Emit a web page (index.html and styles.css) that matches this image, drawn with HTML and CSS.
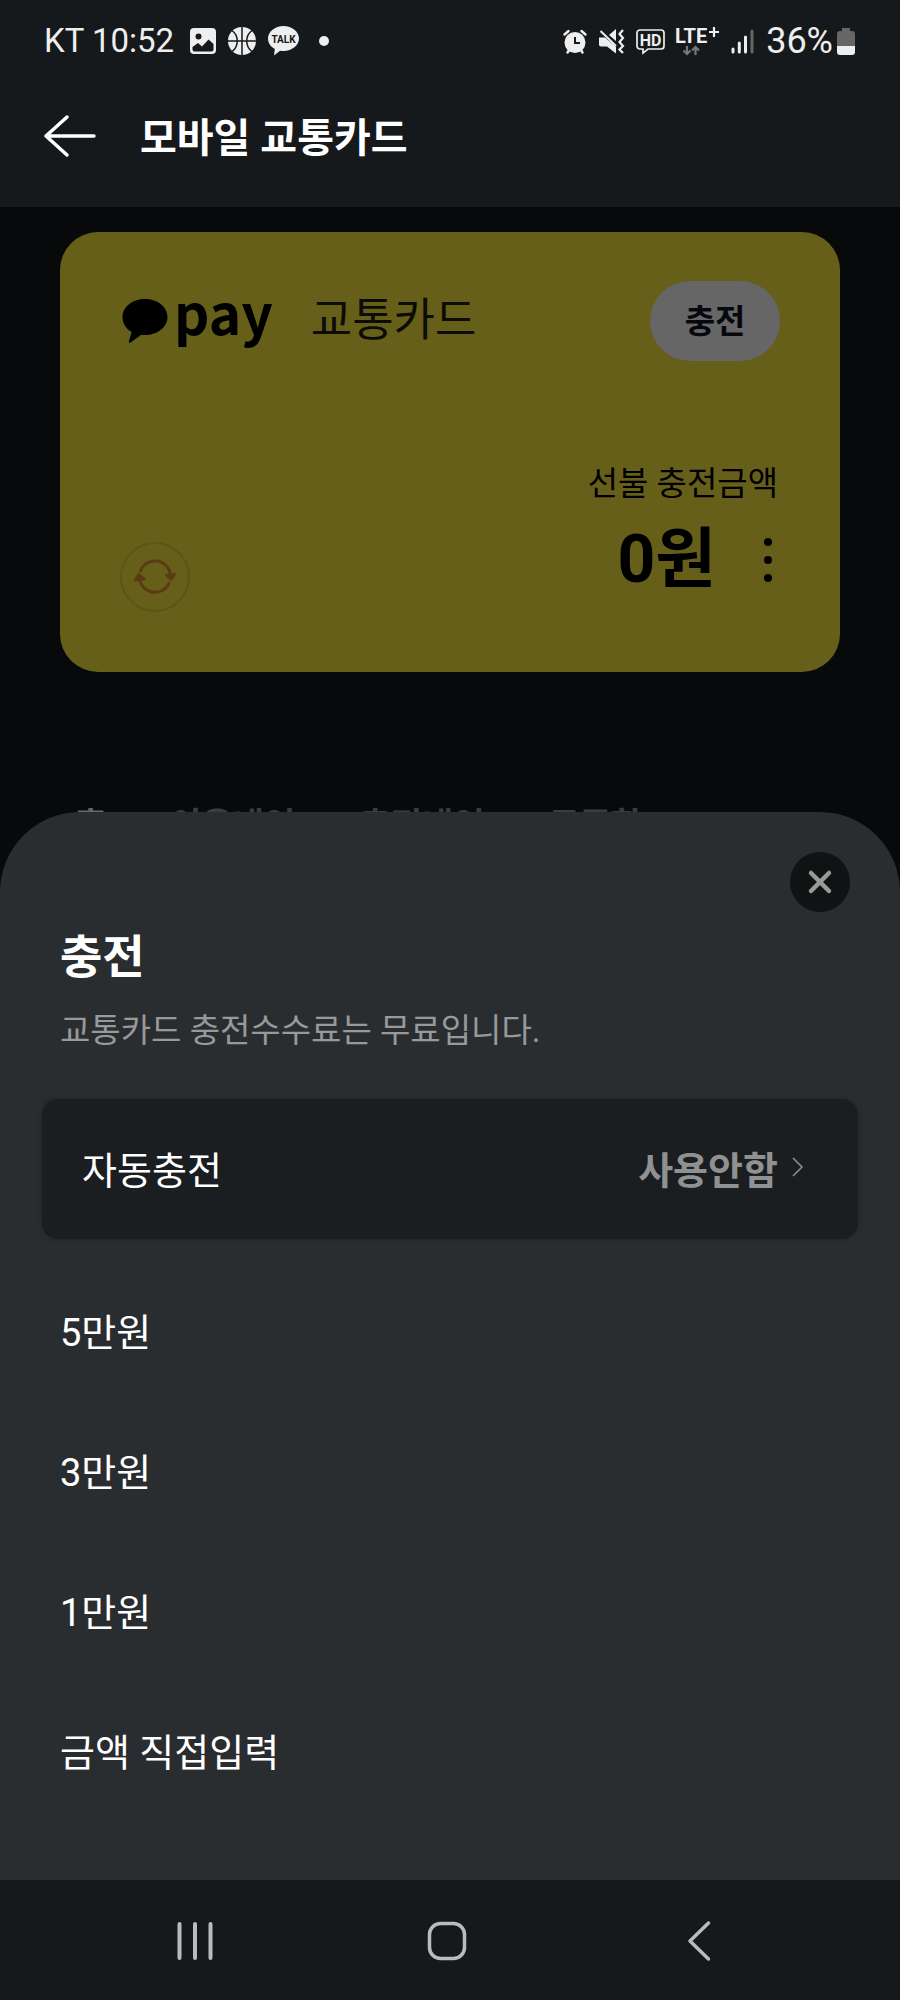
FILE: index.html
```html
<!DOCTYPE html>
<html lang="ko">
<head>
<meta charset="utf-8">
<meta name="viewport" content="width=device-width, initial-scale=1">
<title>모바일 교통카드</title>
<link rel="stylesheet" href="styles.css">
</head>
<body>
<div class="screen">
  <header class="header">
    <div class="status">
      <div class="status-left">
        <span class="status-text carrier">KT 10:52</span>
        <svg width="26" height="26" viewBox="0 0 26 26"><path fill="#eee" fill-rule="evenodd" d="M4 0h18a4 4 0 0 1 4 4v18a4 4 0 0 1-4 4H4a4 4 0 0 1-4-4V4a4 4 0 0 1 4-4zM8.500 5.500a3 3 0 1 0 0 6 3 3 0 0 0 0-6zM2.500 19v2.500a2 2 0 0 0 2 2h17a2 2 0 0 0 2-2V16l-5-4.500-6.500 7-4-3.500z"/></svg>
        <svg width="28" height="28" viewBox="0 0 28 28"><circle cx="14" cy="14" r="14" fill="#eee"/><path d="M14 0v28M0 14h28M4 3.500c7 5 7 16 0 21M24 3.500c-7 5-7 16 0 21" fill="none" stroke="#15191c" stroke-width="1.500"/></svg>
        <svg width="31" height="30" viewBox="0 0 31 30"><path fill="#eee" d="M15.500 0C24 0 31 5.600 31 12.500S24 25 15.500 25c-1.200 0-2.300-.1-3.400-.3L6 29.600l.8-6.600C2.700 20.800 0 17 0 12.500 0 5.600 7 0 15.500 0z"/><text x="15.500" y="17" text-anchor="middle" class="talk-text">TALK</text></svg>
        <span class="dot"></span>
      </div>
      <div class="status-right">
        <svg width="24" height="25" viewBox="0 0 24 25"><path d="M1.500 5.500 5.500 2M22.500 5.500 18.500 2M4.500 23.500l2-3M19.500 23.500l-2-3" stroke="#eee" stroke-width="2.500" stroke-linecap="round"/><circle cx="12" cy="13.500" r="10.500" fill="#eee"/><path d="M12 8v6h5" fill="none" stroke="#15191c" stroke-width="2"/></svg>
        <svg width="25" height="25" viewBox="0 0 25 25"><path fill="#eee" d="M0 8.500h6L17 18v6.500L8 17.500H2a2 2 0 0 1-2-2zM10 6l7-6v12z"/><path d="M1.500 2 17 17" stroke="#eee" stroke-width="2"/><path d="M24 1l-3.500 4L24 9l-3.500 4 3.500 4-3.500 3.500L24 24" fill="none" stroke="#eee" stroke-width="2.200"/></svg>
        <svg width="29" height="25" viewBox="0 0 29 25"><path d="M4 1h21a3 3 0 0 1 3 3v13a3 3 0 0 1-3 3H12l-5 4v-4H4a3 3 0 0 1-3-3V4a3 3 0 0 1 3-3z" fill="none" stroke="#eee" stroke-width="1.700"/><text x="14.500" y="16.500" text-anchor="middle" class="hd-text">HD</text></svg>
        <svg class="i-lte" width="44" height="30" viewBox="0 0 44 30"><path d="M12 20v8M8.500 24.500 12 28l3.500-3.500M20.500 29v-8M17 24.500l3.500-3.500 3.500 3.500" fill="none" stroke="#777" stroke-width="2.200"/><text x="0" y="17" class="lte-text">LTE</text><path d="M39 1v10M34 6h10" stroke="#eee" stroke-width="2.200"/></svg>
        <svg width="23" height="25" viewBox="0 0 23 25"><g stroke-width="3" stroke-linecap="round"><path d="M2 20v3M8.300 14v9M14.500 8v15" stroke="#eee"/><path d="M21 2v21" stroke="#666"/></g></svg>
        <span class="status-text percent">36%</span>
        <svg class="i-batt" width="18" height="27" viewBox="0 0 18 27"><path fill="#666" d="M5 0h8v3h2a3 3 0 0 1 3 3v12H0V6a3 3 0 0 1 3-3h2z"/><path fill="#eee" d="M0 18h18v6a3 3 0 0 1-3 3H3a3 3 0 0 1-3-3z"/></svg>
      </div>
    </div>
    <div class="titlebar">
      <button class="icon-btn" type="button" aria-label="뒤로"><svg width="52" height="42" viewBox="0 0 52 42"><path d="M23 2 2 21l21 19M2 21h48" fill="none" stroke="#fff" stroke-width="3.500" stroke-linecap="round" stroke-linejoin="round"/></svg></button>
      <h1 class="title">모바일 교통카드</h1>
    </div>
  </header>

  <main class="stage">
    <div class="content">
      <section class="card">
        <div class="card-top">
          <div class="brand">
            <svg width="46" height="44" viewBox="0 0 46 44"><path d="M23 0c12.400 0 22.500 7.800 22.500 18S35.400 36 23 36c-1.300 0-2.500-.1-3.700-.2L8.500 43.600c-1 .6-2 0-1.600-1.200L9.600 33C4 29.900.5 24.400.5 18 .5 7.800 10.600 0 23 0z"/></svg>
            <span class="brand-pay">pay</span>
          </div>
          <span class="card-name">교통카드</span>
          <button class="charge-btn" type="button">충전</button>
        </div>
        <div class="card-bottom">
          <button class="refresh" type="button" aria-label="새로고침"><svg width="42" height="36" viewBox="0 0 42 36"><g fill="none" stroke="#5b3b16" stroke-width="3" stroke-linecap="round" stroke-linejoin="round"><path d="M6.500 12A15.500 15.500 0 0 1 36.500 18M35 24.500A15.500 15.500 0 0 1 5.500 18"/><path fill="#5b3b16" d="M32.500 16.500l4.500 4 3.500-5zM1.500 21l3.500-5.500 5 4.500z"/></g></svg></button>
          <div class="balance">
            <span class="balance-label">선불 충전금액</span>
            <div class="balance-row">
              <strong class="amount">0원</strong>
              <button class="icon-btn" type="button" aria-label="더보기"><svg width="8" height="44" viewBox="0 0 8 44"><circle cx="4" cy="4" r="4"/><circle cx="4" cy="22" r="4"/><circle cx="4" cy="40" r="4"/></svg></button>
            </div>
          </div>
        </div>
      </section>
      <nav class="tabs">
        <a class="tab tab-on" href="#home">홈</a>
        <a class="tab" href="#usage">이용내역</a>
        <a class="tab" href="#charges">충전내역</a>
        <a class="tab" href="#coupons">쿠폰함</a>
      </nav>
    </div>

    <section class="sheet" role="dialog" aria-labelledby="sheet-title">
      <button class="close" type="button" aria-label="닫기"><svg width="24" height="24" viewBox="0 0 24 24"><path d="M3 3l18 18M21 3 3 21" stroke="#999b9b" stroke-width="4.500" stroke-linecap="round"/></svg></button>
      <h2 class="sheet-title" id="sheet-title">충전</h2>
      <p class="sheet-sub">교통카드 충전수수료는 무료입니다.</p>
      <button class="auto" type="button">
        <span>자동충전</span>
        <span class="auto-value">사용안함 <svg width="12" height="20" viewBox="0 0 12 20"><path d="M1 1l9 9-9 9" fill="none" stroke="#8f9192" stroke-width="1.500"/></svg></span>
      </button>
      <ul class="options">
        <li><button class="option" type="button">5만원</button></li>
        <li><button class="option" type="button">3만원</button></li>
        <li><button class="option" type="button">1만원</button></li>
        <li><button class="option" type="button">금액 직접입력</button></li>
      </ul>
    </section>
  </main>

  <footer class="sysnav">
    <button class="icon-btn" type="button" aria-label="최근 앱"><svg width="40" height="40" viewBox="0 0 40 40"><path d="M4.500 3v34M20 3v34M35.500 3v34" stroke="#bbb" stroke-width="4" stroke-linecap="round"/></svg></button>
    <button class="icon-btn" type="button" aria-label="홈"><svg width="40" height="40" viewBox="0 0 40 40"><rect x="2.500" y="2.500" width="35" height="35" rx="11" fill="none" stroke="#bbb" stroke-width="3.500"/></svg></button>
    <button class="icon-btn" type="button" aria-label="이전"><svg width="24" height="40" viewBox="0 0 24 40"><path d="M21.500 2 3 20l18.500 18" fill="none" stroke="#bbb" stroke-width="3.500" stroke-linecap="round" stroke-linejoin="round"/></svg></button>
  </footer>
</div>
</body>
</html>
```

FILE: styles.css
```css
* {
  box-sizing: border-box;
}

body {
  margin: 0;
  background: #15191c;
  font-family: Roboto, "Noto Sans CJK KR", sans-serif;
}

h1, h2, p, ul {
  margin: 0;
  padding: 0;
}

ul {
  list-style: none;
}

svg {
  display: block;
  flex: none;
  overflow: visible;
}

button {
  border: 0;
  padding: 0;
  background: none;
  color: inherit;
  font: inherit;
}

.screen {
  display: flex;
  flex-direction: column;
  min-height: 100vh;
}

.icon-btn {
  display: flex;
  align-items: center;
  justify-content: center;
}

/* Header */
.header {
  padding: 0 45px 17px 44px;
  color: #fff;
}

.status {
  display: flex;
  align-items: center;
  justify-content: space-between;
  height: 82px;
}

.status-left,
.status-right {
  display: flex;
  align-items: center;
}

.status-text {
  color: #eee;
  font-size: 33px;
  line-height: 40px;
}

.carrier {
  padding-right: 4px;
}

.percent {
  font-size: 36px;
}

.status-left,
.status-right {
  gap: 12px;
}

.i-lte {
  margin-left: -2px;
}

.i-batt {
  margin-left: -8px;
}

.dot {
  width: 10px;
  height: 10px;
  margin-left: 8px;
  border-radius: 50%;
  background: #eee;
}

.talk-text {
  fill: #15191c;
  font-size: 10px;
  font-weight: 700;
}

.hd-text {
  fill: #eee;
  font-size: 16px;
  font-weight: 700;
}

.lte-text {
  fill: #eee;
  font-size: 20px;
  font-weight: 700;
}

.titlebar {
  display: flex;
  align-items: center;
  gap: 44px;
  height: 108px;
}

.title {
  padding-top: 6px;
  font-size: 40px;
  font-weight: 700;
  line-height: 56px;
}

/* Dimmed page under the sheet */
.stage {
  display: grid;
  flex: 1;
  background: #08090b;
}

.content,
.sheet {
  grid-area: 1 / 1;
}

.content {
  padding: 25px 60px 0;
}

.card {
  display: flex;
  flex-direction: column;
  justify-content: space-between;
  min-height: 440px;
  padding: 49px 60px 60px 62px;
  border-radius: 38px;
  background: #665f19;
  color: #000;
}

.card-top {
  display: flex;
  align-items: center;
  height: 80px;
}

.brand {
  display: flex;
  align-items: center;
  gap: 6px;
}

.brand-pay {
  padding-bottom: 20px;
  font-family: "Noto Sans CJK KR", sans-serif;
  font-size: 55px;
  font-weight: 700;
  line-height: 80px;
}

.card-name {
  margin-left: 38px;
  color: #0c0c05;
  font-size: 45px;
  line-height: 64px;
}

.charge-btn {
  width: 130px;
  height: 80px;
  margin-left: auto;
  padding-bottom: 4px;
  border-radius: 40px;
  background: #666;
  color: #060810;
  font-size: 33px;
  font-weight: 700;
}

.card-bottom {
  display: flex;
  align-items: flex-end;
  justify-content: space-between;
}

.refresh {
  display: flex;
  align-items: center;
  justify-content: center;
  width: 70px;
  height: 70px;
  margin-left: -2px;
  border: 2px solid #5d5417;
  border-radius: 50%;
}

.balance {
  display: flex;
  flex-direction: column;
  align-items: flex-end;
  gap: 20px;
  padding-bottom: 16px;
}

.balance-label {
  padding-right: 2px;
  font-size: 33px;
  line-height: 40px;
}

.balance-row {
  display: flex;
  align-items: center;
  gap: 48px;
  padding-right: 8px;
}

.amount {
  font-size: 66px;
  line-height: 72px;
}

.tabs {
  display: flex;
  gap: 64px;
  padding: 129px 15px 0;
}

.tab {
  color: #3b3c3c;
  font-size: 34px;
  font-weight: 700;
  line-height: 48px;
  text-decoration: none;
}

.tab-on {
  color: #666;
}

/* Bottom sheet */
.sheet {
  z-index: 1;
  align-self: end;
  display: flex;
  flex-direction: column;
  padding: 40px 42px 59px;
  border-radius: 80px 80px 0 0;
  background: #292d30;
  color: #fff;
}

.close {
  display: flex;
  align-items: center;
  justify-content: center;
  align-self: flex-end;
  width: 60px;
  height: 60px;
  margin-right: 8px;
  border-radius: 50%;
  background: #111214;
}

.sheet-title {
  margin-top: 15px;
  padding: 0 18px;
  font-size: 46px;
  font-weight: 700;
  line-height: 60px;
}

.sheet-sub {
  margin-top: 24px;
  padding: 0 18px;
  color: #97999a;
  font-size: 33px;
  line-height: 40px;
}

.auto {
  display: flex;
  align-items: center;
  justify-content: space-between;
  height: 140px;
  margin-top: 48px;
  padding: 0 54px 4px 40px;
  border-radius: 16px;
  background: #1a1e20;
  box-shadow: 0 0 4px #1f2326;
  font-size: 38px;
}

.auto-value {
  display: flex;
  align-items: center;
  gap: 14px;
  color: #8f9192;
  font-weight: 700;
}

.options {
  margin-top: 22px;
}

.option {
  width: 100%;
  height: 140px;
  padding: 0 18px 4px;
  font-size: 38px;
  text-align: left;
}

/* System navigation */
.sysnav {
  display: grid;
  grid-template-columns: repeat(3, 1fr);
  height: 120px;
  padding: 2px 75px 0 69px;
}
```
